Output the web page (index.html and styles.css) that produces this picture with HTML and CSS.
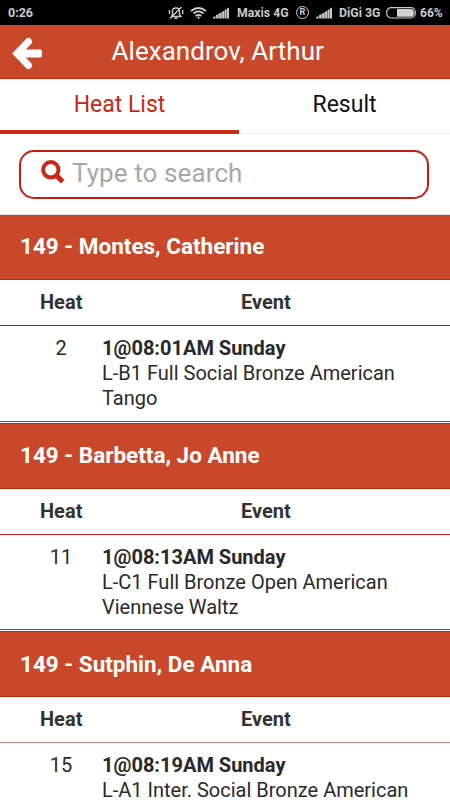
FILE: index.html
```html
<!DOCTYPE html>
<html lang="en">
<head>
<meta charset="utf-8">
<title>Heat List</title>
<link rel="stylesheet" href="styles.css">
</head>
<body>
<div class="status">
  <span class="clock">0:26</span>
  <svg class="bell" width="16" height="14" viewBox="0 0 16 14" fill="none" stroke="#c9c9c9" stroke-width="1.4"><path d="M3.5 10.5 4.5 8.500V5Q4.500 2 8 2T11.500 5V8.500L13 10.500ZM6.500 12.300H9.500M2 12.500 13.500 1M1.500 4V8M14.700 4V8"/></svg>
  <svg class="wifi" width="17" height="14" viewBox="0 0 17 14" fill="none" stroke="#d0d0d0" stroke-width="1.8"><path d="M1 5Q8.500-1 16 5M3.500 7.500Q8.500 3.300 13.500 7.500M5.700 10Q8.500 7.700 11.300 10"/><circle cx="8.500" cy="11.700" r="1.100" fill="#d0d0d0" stroke="none"/></svg>
  <svg class="signal" width="17" height="12" viewBox="0 0 17 12" fill="#c8c8c8"><path d="M0 11.500V10.300L2.500 9V11.500ZM3.100 11.500V8L5.700 7V11.500ZM6.100 11.500V6.500L8.700 5.300V11.500ZM9.100 11.500V4.800L11.200 3.800V11.500ZM11.600 11.500V3L13.600 2V11.500ZM14 11.500V1.500L16 .500V11.500Z"/></svg>
  <span class="carrier">Maxis 4G</span>
  <span class="roam">R</span>
  <svg class="signal second" width="17" height="12" viewBox="0 0 17 12" fill="#c8c8c8"><path d="M0 11.500V10.300L2.500 9V11.500ZM3.100 11.500V8L5.700 7V11.500ZM6.100 11.500V6.500L8.700 5.300V11.500ZM9.100 11.500V4.800L11.200 3.800V11.500ZM11.600 11.500V3L13.600 2V11.500ZM14 11.500V1.500L16 .500V11.500Z"/></svg>
  <span class="carrier digi">DiGi 3G</span>
  <svg class="battery" width="31" height="12" viewBox="0 0 31 12"><rect x=".7" y=".7" width="28.600" height="10.300" rx="4.500" fill="none" stroke="#c9c9c9" stroke-width="1.200"/><path d="M11 2H25Q28 2 28 5.900T25 9.800H11ZM29.500 4Q31 6 29.500 8Z" fill="#d2d2d2"/></svg>
  <span class="percent">66%</span>
</div>
<header class="bar">
  <svg class="back" width="31" height="33" viewBox="0 0 31 33" fill="none" stroke="#fff" stroke-linecap="round"><path d="M16.500 4.500 5 16.500 16.500 28.500" stroke-width="7"/><path d="M1 16.500 6 11V22Z" fill="#fff" stroke="none"/><path d="M6 16.500H28" stroke-width="8" stroke-linecap="butt"/><path d="M28 14.500V18.500" stroke-width="4"/></svg>
  <h1>Alexandrov, Arthur</h1>
</header>
<nav class="tabs">
  <div class="tab active"><span>Heat List</span></div>
  <div class="tab"><span>Result</span></div>
</nav>
<div class="search-area">
  <div class="search">
    <svg class="glass" width="24" height="24" viewBox="0 0 24 24" fill="none" stroke="#c92a18"><circle cx="9.800" cy="9.800" r="7.700" stroke-width="4"/><path d="M15.500 15.500 21.700 21.700" stroke-width="5"/></svg>
    <span>Type to search</span>
  </div>
</div>
<main>
  <section>
    <h2><span>149 - Montes, Catherine</span></h2>
    <div class="columns"><b>Heat</b><b>Event</b></div>
    <div class="row"><div class="heat">2</div><div class="event"><b>1@08:01AM Sunday</b><br>L-B1 Full Social Bronze American<br>Tango</div></div>
  </section>
  <section>
    <h2><span>149 - Barbetta, Jo Anne</span></h2>
    <div class="columns"><b>Heat</b><b>Event</b></div>
    <div class="row"><div class="heat">11</div><div class="event"><b>1@08:13AM Sunday</b><br>L-C1 Full Bronze Open American<br>Viennese Waltz</div></div>
  </section>
  <section>
    <h2><span>149 - Sutphin, De Anna</span></h2>
    <div class="columns"><b>Heat</b><b>Event</b></div>
    <div class="row last"><div class="heat">15</div><div class="event"><b>1@08:19AM Sunday</b><br>L-A1 Inter. Social Bronze American</div></div>
  </section>
</main>
</body>
</html>
```

FILE: styles.css
```css
* { box-sizing: border-box; }
html { overflow: hidden; }
body { margin: 0; width: 450px; height: 800px; overflow: hidden; background: #fff; color: #292929; font-family: Roboto, sans-serif; }
.status { display: flex; align-items: center; height: 25px; padding-left: 8px; background: #000; color: #cbcbcb; font-size: 12px; font-weight: 700; white-space: nowrap; }
.status > * { flex: none; }
.clock { width: 160px; font-size: 12.500px; }
.bell { width: 16px; margin-right: 6px; }
.wifi { margin-right: 6px; }
.signal { margin-right: 7px; }
.carrier { width: 53px; font-size: 12.300px; }
.roam { display: grid; place-items: center; width: 13px; height: 13px; margin: 0 7px 0 6px; border: 1px solid #ccc; border-radius: 50%; font-size: 9px; line-height: 11px; }
.second { margin-right: 6px; }
.digi { width: 47px; }
.battery { margin-right: 3px; }
.bar { display: flex; align-items: center; height: 54px; padding-left: 12px; background: #c94829; border-bottom: 1px solid #c92408; color: #fff; }
.back { margin-top: 4px; }
h1 { margin: -2px 0 0 68.500px; font-size: 26px; line-height: 30px; font-weight: 400; letter-spacing: .05px; }
.tabs { display: flex; height: 55px; font-size: 23px; line-height: 50px; color: #111; text-align: center; }
.tab { flex: 1; height: 55px; padding-top: 1px; border-bottom: 1px solid #eee; }
.tab.active { flex: 0 0 239px; border-bottom: 4px solid #cc2c16; color: #c92716; }
.search-area { height: 81px; padding: 16px 19px; border-bottom: 1px solid #ddd; }
.search { display: flex; width: 410px; height: 49px; padding-left: 20px; border: 2px solid #c81c10; border-radius: 15px; font-size: 26px; line-height: 43px; color: #a8a8a8; letter-spacing: .1px; }
.glass { margin: 8px 7px 0 0; }
section { height: 209px; }
section:nth-child(2) { height: 208px; }
section:last-child { height: 168px; }
h2 { height: 65px; margin: 0; padding-left: 20px; background: #c94829; border-bottom: 1px solid #c5270a; color: #fff; font-size: 22.500px; line-height: 63px; font-weight: 700; }
.columns { display: grid; grid-template-columns: 201px 1fr; height: 46px; padding-left: 40px; border-bottom: 1px solid #c21d1d; color: #333; font-size: 20px; line-height: 44px; }
.row { display: flex; height: 97px; padding-top: 10px; border-bottom: 3px double #ca2020; font-size: 20px; line-height: 25px; white-space: nowrap; }
section:first-child .row { height: 98px; }
section:nth-child(2) h2 { line-height: 62px; }
section:last-child h2 { line-height: 64px; }
section:last-child .columns { line-height: 45px; border-color: #d08080; }
.row.last { height: 57px; border: 0; }
.heat { width: 102px; padding-left: 20px; text-align: center; padding-right: 0; }
.event { flex: 1; }
```
